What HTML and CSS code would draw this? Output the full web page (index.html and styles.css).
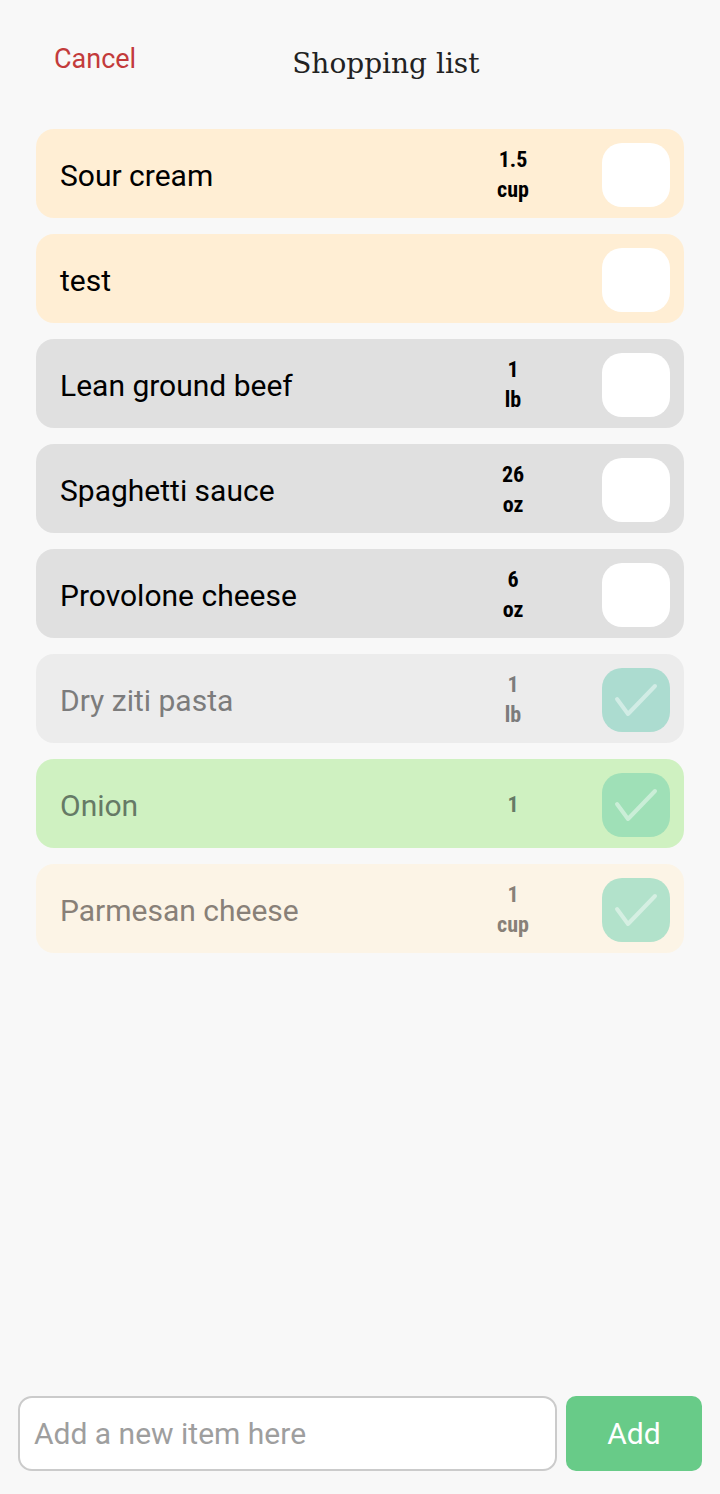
FILE: index.html
```html
<!DOCTYPE html>
<html lang="en">
<head>
<meta charset="utf-8">
<title>Shopping list</title>
<link rel="stylesheet" href="styles.css">
</head>
<body>
<div class="app">
  <header class="header">
    <span class="cancel">Cancel</span>
    <h1 class="title">Shopping list</h1>
  </header>
  <main class="list">
    <div class="item item-cream">
      <span class="name">Sour cream</span>
      <span class="qty"><span>1.5</span><span>cup</span></span>
      <span class="box"></span>
    </div>
    <div class="item item-cream">
      <span class="name">test</span>
      <span class="qty"></span>
      <span class="box"></span>
    </div>
    <div class="item item-grey">
      <span class="name">Lean ground beef</span>
      <span class="qty"><span>1</span><span>lb</span></span>
      <span class="box"></span>
    </div>
    <div class="item item-grey">
      <span class="name">Spaghetti sauce</span>
      <span class="qty"><span>26</span><span>oz</span></span>
      <span class="box"></span>
    </div>
    <div class="item item-grey">
      <span class="name">Provolone cheese</span>
      <span class="qty"><span>6</span><span>oz</span></span>
      <span class="box"></span>
    </div>
    <div class="item item-done-grey">
      <span class="name">Dry ziti pasta</span>
      <span class="qty"><span>1</span><span>lb</span></span>
      <span class="box box-checked box-teal"><svg viewBox="0 0 68 64" width="68" height="64"><path d="M15 31 L26 46 L53 18" /></svg></span>
    </div>
    <div class="item item-done-green">
      <span class="name">Onion</span>
      <span class="qty"><span>1</span></span>
      <span class="box box-checked box-green"><svg viewBox="0 0 68 64" width="68" height="64"><path d="M15 31 L26 46 L53 18" /></svg></span>
    </div>
    <div class="item item-done-cream">
      <span class="name">Parmesan cheese</span>
      <span class="qty"><span>1</span><span>cup</span></span>
      <span class="box box-checked box-mint"><svg viewBox="0 0 68 64" width="68" height="64"><path d="M15 31 L26 46 L53 18" /></svg></span>
    </div>
  </main>
  <footer class="footer">
    <div class="input"><span class="placeholder">Add a new item here</span></div>
    <button class="add">Add</button>
  </footer>
</div>
</body>
</html>
```
FILE: styles.css
```css
* { box-sizing: border-box; }
html, body { margin: 0; padding: 0; }
body {
  background: #f8f8f8;
  font-family: Roboto, "Liberation Sans", sans-serif;
  color: #000;
}
.app {
  min-height: 1494px;
  display: flex;
  flex-direction: column;
}
.header {
  display: flex;
  align-items: flex-start;
  height: 129px;
  padding-left: 54px;
}
.cancel {
  color: #c33b3b;
  font-size: 27px;
  line-height: 30px;
  margin-top: 44px;
}
.title {
  margin: 0 0 0 156px;
  margin-top: 47px;
  font-family: "DejaVu Serif", serif;
  font-weight: normal;
  font-size: 28px;
  line-height: 34px;
  color: #222;
}
.list {
  display: flex;
  flex-direction: column;
  gap: 16px;
  padding: 0 36px;
}
.item {
  display: flex;
  align-items: center;
  height: 89px;
  border-radius: 18px;
  padding: 0 14px 0 24px;
}
.name {
  flex: 1;
  font-size: 30px;
  padding-top: 3px;
}
.qty {
  width: 80px;
  margin-right: 49px;
  display: flex;
  flex-direction: column;
  align-items: center;
  font-family: "Roboto Condensed", Roboto, sans-serif;
  font-stretch: 80%;
  font-weight: bold;
  font-size: 22px;
  line-height: 30px;
  margin-top: 2px;
}
.box {
  width: 68px;
  height: 64px;
  border-radius: 20px;
  background: #fff;
  margin-top: 2px;
  display: block;
}
.box svg { display: block; }
.box svg path {
  fill: none;
  stroke: rgba(255, 255, 255, 0.45);
  stroke-width: 4;
  stroke-linecap: round;
  stroke-linejoin: round;
}
.item-cream { background: #ffeed4; }
.item-grey { background: #e0e0e0; }
.item-done-grey { background: #ececec; color: #7c7c7c; }
.item-done-green { background: #cff1c1; color: #667a66; }
.item-done-cream { background: #fcf4e6; color: #888078; }
.box-teal { background: #acdcd0; }
.box-green { background: #9fe0b7; }
.box-mint { background: #b2e2cb; }
.footer {
  margin-top: auto;
  display: flex;
  gap: 9px;
  padding: 0 18px 23px 18px;
}
.input {
  flex: 1;
  height: 75px;
  border: 2px solid #cbcbcb;
  border-radius: 14px;
  background: #fff;
  display: flex;
  align-items: center;
  padding-left: 14px;
}
.placeholder {
  color: #9e9e9e;
  font-size: 30px;
}
.add {
  width: 136px;
  height: 75px;
  border: none;
  border-radius: 10px;
  background: #68cb88;
  color: #fff;
  font-family: Roboto, sans-serif;
  font-size: 30px;
  padding: 0;
}
```
